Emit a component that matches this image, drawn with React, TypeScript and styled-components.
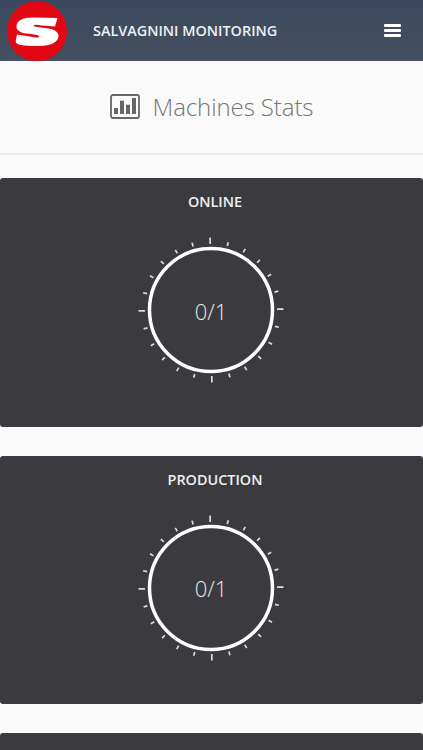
import * as React from "react";
import styled, { createGlobalStyle } from "styled-components";

const GlobalStyle = createGlobalStyle`
  html, body {
    margin: 0;
    padding: 0;
    height: 750px;
    overflow: hidden;
    background: #fafafa;
    font-family: "Open Sans", "Liberation Sans", sans-serif;
  }
`;

const cards = [
  { title: "ONLINE", value: "0/1" },
  { title: "PRODUCTION", value: "0/1" },
  { title: "", value: "" }
];

const Logo = () => (
  <LogoSvg viewBox="0 0 60 60">
    <circle cx="30" cy="30" r="30" fill="#e30613" />
    <path
      fill="#fff"
      d="M50.5 17L48 25.5L35 24.5Q27 23 26.5 24.5Q27 26 36 26.8C47 27.8 51.5 30.5 51.5 35C51.5 41 44 45 32 45C24 45 18 44.8 14 44Q9 43 8.7 40.5L10 33.5L29 36.5Q33 36.5 32 35Q30 33.5 22 32.8C13 32 9.5 29.5 9.5 25.5C9.5 19.5 16 16.5 26 16.5Z"
    />
  </LogoSvg>
);

const StatsIcon = () => (
  <IconSvg viewBox="0 0 30 25">
    <rect x="1" y="1" width="28" height="23" rx="2" fill="none" stroke="#666" strokeWidth="1.8" />
    <rect x="4" y="14" width="4" height="6" fill="#666" />
    <rect x="10" y="6.7" width="4" height="13.3" fill="#666" />
    <rect x="16" y="10.7" width="4" height="9.3" fill="#666" />
    <rect x="22" y="4" width="4" height="16" fill="#666" />
  </IconSvg>
);

const Gauge = ({ value }: { value: string }) => (
  <GaugeBox>
    <svg width="150" height="150" viewBox="-75 -75 150 150">
      <circle r="61.5" fill="none" stroke="#fff" strokeWidth="3.5" />
      {Array.from({ length: 24 }, (_, i) => {
        const major = i % 6 === 0;
        return (
          <line
            key={i}
            x1="0"
            x2="0"
            y1={major ? -72.5 : -70}
            y2="-66"
            stroke="#dcdcdc"
            strokeWidth="1.7"
            transform={`rotate(${i * 15 - 0.7})`}
          />
        );
      })}
    </svg>
    <GaugeValue>{value}</GaugeValue>
  </GaugeBox>
);

export default function App() {
  return (
    <Page>
      <GlobalStyle />
      <Header>
        <Logo />
        <Brand>SALVAGNINI MONITORING</Brand>
        <Burger>
          <span />
          <span />
          <span />
        </Burger>
      </Header>

      <TitleBar>
        <StatsIcon />
        <Title>Machines Stats</Title>
      </TitleBar>

      <Cards>
        {cards.map((card, i) => (
          <Card key={i}>
            <CardTitle>{card.title}</CardTitle>
            {card.value && <Gauge value={card.value} />}
          </Card>
        ))}
      </Cards>
    </Page>
  );
}

const Page = styled.div`
  width: 423px;
  height: 750px;
  overflow: hidden;
  background: #fafafa;
`;

const Header = styled.header`
  display: flex;
  align-items: center;
  height: 61px;
  padding-left: 7px;
  box-sizing: border-box;
  background: linear-gradient(#3b4960, #44505f);
`;

const LogoSvg = styled.svg`
  width: 60px;
  height: 60px;
  flex: none;
`;

const Brand = styled.div`
  margin-left: 26px;
  flex: 1;
  font-size: 14.4px;
  font-weight: 600;
  color: #eef0f2;
`;

const Burger = styled.div`
  display: flex;
  flex-direction: column;
  gap: 2px;
  width: 17px;
  margin-right: 22px;

  span {
    display: block;
    height: 3.3px;
    background: #fff;
    border-radius: 1px;
  }
`;

const TitleBar = styled.div`
  display: flex;
  align-items: center;
  justify-content: center;
  gap: 13px;
  height: 94px;
  box-sizing: border-box;
  padding-bottom: 2px;
  border-bottom: 2px solid #eeeeee;
`;

const IconSvg = styled.svg`
  width: 30px;
  height: 25px;
  flex: none;
`;

const Title = styled.h1`
  margin: 0;
  font-size: 24px;
  letter-spacing: -0.1px;
  font-weight: 300;
  color: #757575;
`;

const Cards = styled.div`
  display: flex;
  flex-direction: column;
  gap: 29px;
  padding-top: 23px;
`;

const Card = styled.section`
  height: 248.5px;
  flex: none;
  box-sizing: border-box;
  padding-top: 14px;
  background: #3a3a3f;
  border-radius: 3px;
`;

const CardTitle = styled.div`
  height: 20px;
  padding-left: 7px;
  text-align: center;
  font-size: 14.4px;
  line-height: 20px;
  font-weight: 600;
  color: #f0f0f0;
`;

const GaugeBox = styled.div`
  position: relative;
  width: 150px;
  height: 150px;
  margin: 23px 0 0 136px;
`;

const GaugeValue = styled.div`
  position: absolute;
  inset: 0;
  padding-top: 1px;
  display: flex;
  align-items: center;
  justify-content: center;
  font-size: 22px;
  font-weight: 300;
  color: #e6e6e6;
`;
